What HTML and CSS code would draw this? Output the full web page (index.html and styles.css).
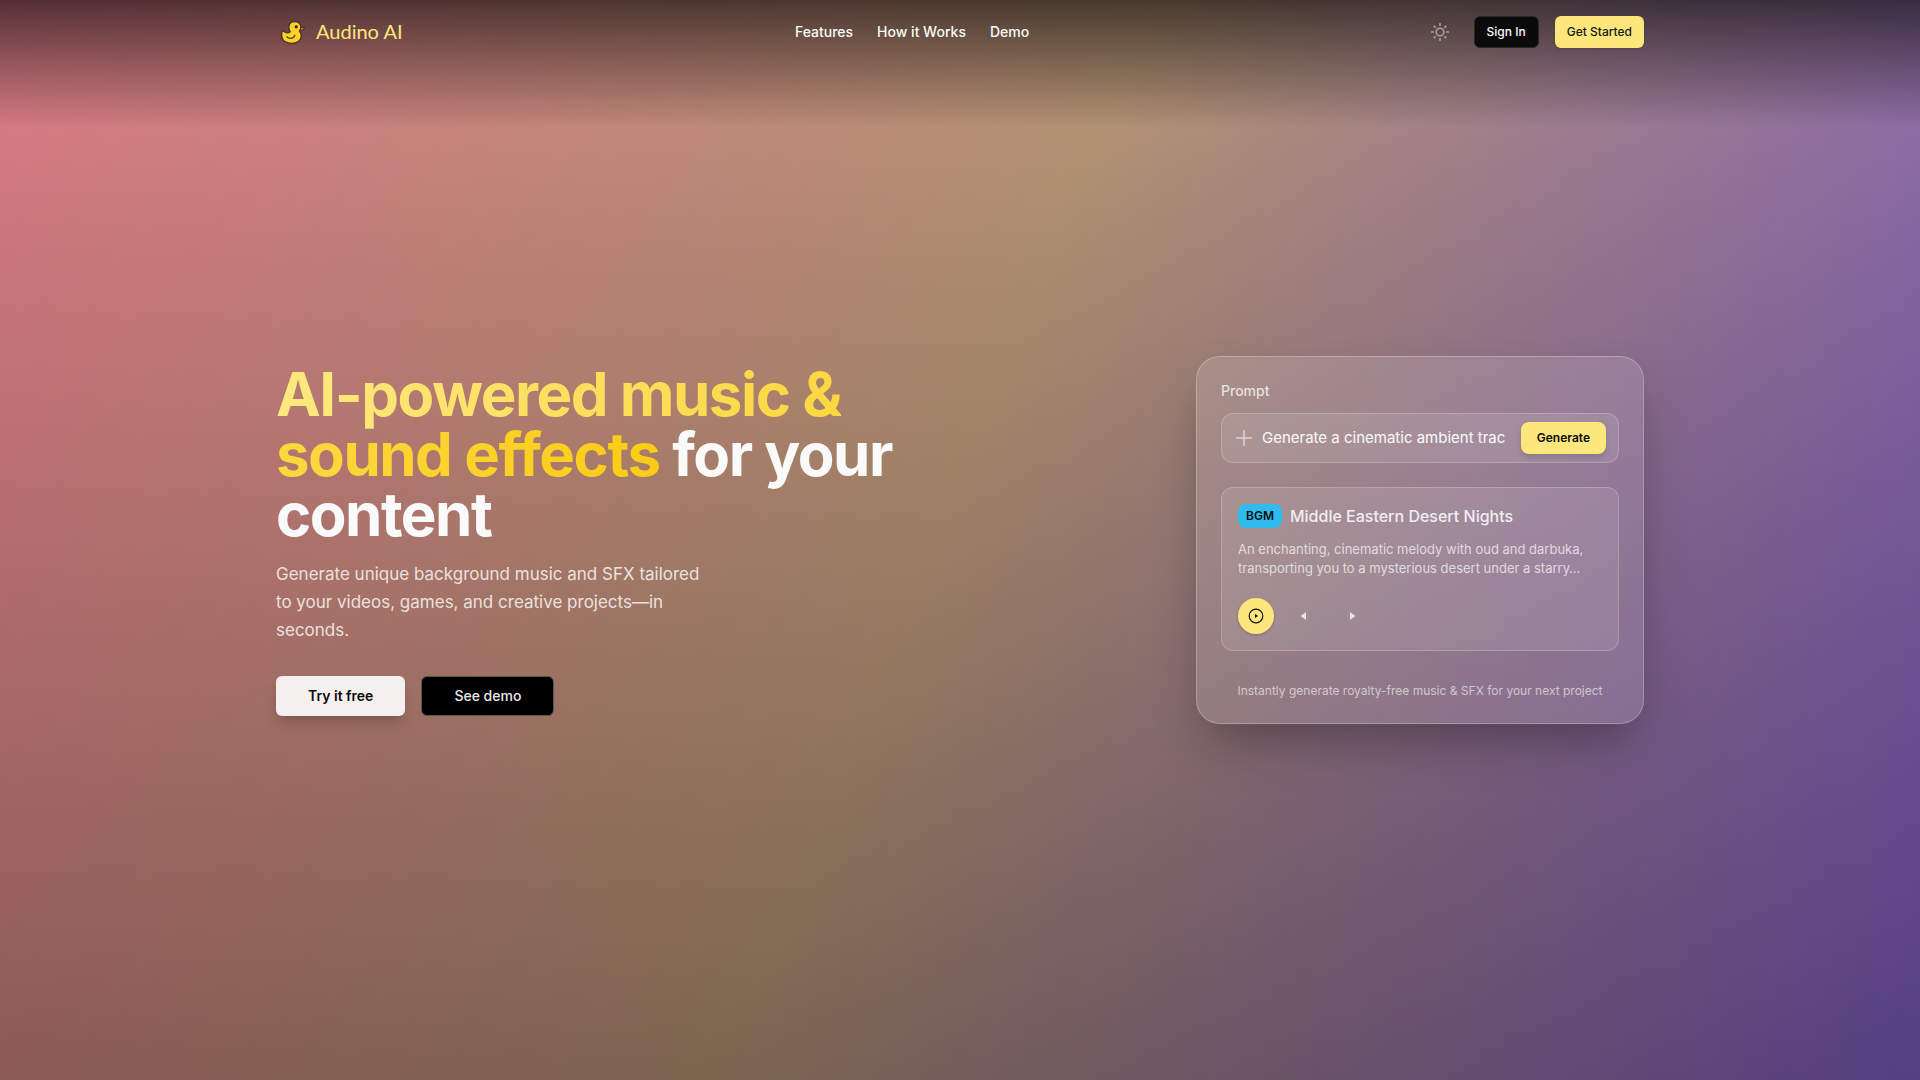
FILE: index.html
```html
<!DOCTYPE html>
<html lang="en">
<head>
<meta charset="utf-8">
<meta name="viewport" content="width=device-width, initial-scale=1">
<title>Audino AI</title>
<link rel="stylesheet" href="styles.css">
</head>
<body>
<header class="header">
  <div class="container bar">
    <a class="brand" href="#">
      <svg class="duck" viewBox="0 0 32 32" aria-hidden="true">
        <path d="M5.500 14.500C4 20 5 24.500 9 26.500c5 2.200 10.500 2 14-.5 3.600-2.700 4-7.500 1-11 1.200-1.200 1.800-2.800 1.600-4.500C25.200 7 22.500 4.700 19 4.700c-4 0-6.500 2.800-6.500 6.300 0 2.200.8 3.500 1.500 4.700-1.500 1.400-3.600 1.400-5.200.5C7.500 15.500 6.500 14.200 5.500 14.500Z" fill="#fbd12b" stroke="#4a3426" stroke-width="1.600" stroke-linejoin="round"/>
        <path d="M25.300 11.700l3.700-.9c.3 2-1 3.600-4.200 3.300Z" fill="#f6a21c" stroke="#4a3426" stroke-width="1.300" stroke-linejoin="round"/>
        <circle cx="20.500" cy="10.500" r="1.700" fill="#33241c"/>
        <path d="M10.500 21c1.800 2.600 7 2.600 8.500-1.300" fill="none" stroke="#5a401f" stroke-width="1.400" stroke-linecap="round"/>
      </svg>
      <span>Audino AI</span>
    </a>
    <nav class="nav">
      <a href="#features">Features</a>
      <a href="#how">How it Works</a>
      <a href="#demo">Demo</a>
    </nav>
    <div class="actions">
      <button class="theme" type="button" aria-label="Toggle theme">
        <svg viewBox="0 0 20 20" fill="none" stroke="currentColor" stroke-width="1.500">
          <circle cx="10" cy="10" r="3.800"/>
          <path d="M10 1v3M10 16v3M1 10h3M16 10h3M3.700 3.700l2 2M14.300 14.300l2 2M16.300 3.700l-2 2M5.700 14.300l-2 2"/>
        </svg>
      </button>
      <button class="btn btn-small btn-dark" type="button">Sign In</button>
      <button class="btn btn-small btn-yellow" type="button">Get Started</button>
    </div>
  </div>
</header>
<main class="container hero">
  <section class="intro">
    <h1><span class="accent">AI-powered music &amp; sound effects</span> for your content</h1>
    <p class="lead">Generate unique background music and SFX tailored to your videos, games, and creative projects—in seconds.</p>
    <div class="cta">
      <button class="btn btn-light" type="button">Try it free</button>
      <button class="btn btn-black" type="button">See demo</button>
    </div>
  </section>
  <section class="card">
    <label class="label" for="prompt">Prompt</label>
    <div class="prompt">
      <svg class="plus" viewBox="0 0 20 20" fill="none" stroke="currentColor" stroke-width="1.500"><path d="M10 2v16M2 10h16"/></svg>
      <input id="prompt" type="text" placeholder="Generate a cinematic ambient trac">
      <button class="btn generate" type="button">Generate</button>
    </div>
    <article class="track">
      <div class="track-head">
        <span class="badge">BGM</span>
        <h2>Middle Eastern Desert Nights</h2>
      </div>
      <p class="track-text">An enchanting, cinematic melody with oud and darbuka, transporting you to a mysterious desert under a starry…</p>
      <div class="controls">
        <button class="control play" type="button" aria-label="Play">
          <svg viewBox="0 0 16 16"><circle cx="8" cy="8" r="6.800" fill="none" stroke="currentColor" stroke-width="1.200"/><path d="M7 6v4l3-2z" fill="currentColor"/></svg>
        </button>
        <button class="control" type="button" aria-label="Previous">
          <svg viewBox="0 0 16 16"><path d="M10 4v8L4.500 8z" fill="currentColor"/></svg>
        </button>
        <button class="control" type="button" aria-label="Next">
          <svg viewBox="0 0 16 16"><path d="M6 4v8l5.500-4z" fill="currentColor"/></svg>
        </button>
      </div>
    </article>
    <p class="caption">Instantly generate royalty-free music &amp; SFX for your next project</p>
  </section>
</main>
</body>
</html>
```
FILE: styles.css
```css
*, *::before, *::after { box-sizing: border-box; }

body {
  margin: 0;
  min-height: 100vh;
  display: flex;
  flex-direction: column;
  color: #fafafa;
  font-family: Inter, "Liberation Sans", sans-serif;
  font-size: 16px;
  background:
    linear-gradient(to bottom, rgba(0, 0, 0, 0) 0%, rgba(0, 0, 0, 0.33) 100%),
    linear-gradient(112deg, #de7d88 0%, #b99777 49%, #7f5dc2 100%);
}

h1, h2, p { margin: 0; }
button, input { font: inherit; color: inherit; }
a { color: inherit; text-decoration: none; }

.container {
  width: 100%;
  max-width: 1400px;
  margin: 0 auto;
  padding: 0 16px;
}

.header {
  position: absolute;
  top: 0;
  left: 0;
  right: 0;
  height: 128px;
  background: linear-gradient(to bottom, rgba(0, 0, 0, 0.62), rgba(0, 0, 0, 0));
}

.bar {
  height: 64px;
  display: flex;
  align-items: center;
  justify-content: space-between;
}

.brand {
  display: flex;
  align-items: center;
  gap: 8px;
  color: #fce77d;
  font-family: Lato, sans-serif;
  font-size: 20px;
  line-height: 28px;
}
.brand span { padding-bottom: 2px; }
.duck { width: 32px; height: 32px; padding: 1px; }

.nav {
  display: flex;
  gap: 24px;
  font-size: 14px;
  font-weight: 500;
  line-height: 20px;
}

.actions {
  display: flex;
  align-items: center;
  gap: 16px;
}

.theme {
  display: flex;
  align-items: center;
  justify-content: center;
  width: 36px;
  height: 36px;
  padding: 0;
  border: 0;
  background: none;
  color: #a5a09f;
}
.theme svg { width: 20px; height: 20px; }

.btn {
  height: 40px;
  padding: 0 32px;
  border: 0;
  border-radius: 6px;
  font-size: 14px;
  font-weight: 500;
  line-height: 20px;
  white-space: nowrap;
}
.btn-small { height: 32px; padding: 0 12px; font-size: 12px; line-height: 16px; }
.btn-dark { background: #0a0a0a; border: 1px solid #272727; }
.btn-yellow { background: #fce77d; color: #171717; box-shadow: 0 1px 3px rgba(0, 0, 0, 0.15); }
.btn-light {
  background: #f5f0f0;
  color: #0a0a0a;
  font-weight: 600;
  box-shadow: 0 10px 15px -3px rgba(0, 0, 0, 0.15), 0 4px 6px -4px rgba(0, 0, 0, 0.15);
}
.btn-black { background: #000; border: 1px solid #54585a; color: #e8e8e8; }

.hero {
  flex: 1;
  display: flex;
  align-items: center;
  justify-content: space-between;
  gap: 48px;
}

.intro { flex: 0 1 672px; }

h1 {
  font-size: 60px;
  font-weight: 700;
  line-height: 60px;
  letter-spacing: -0.025em;
}
.accent {
  color: transparent;
  background: linear-gradient(to right, #fde880, #facc15);
  -webkit-background-clip: text;
  background-clip: text;
}

.lead {
  max-width: 436px;
  margin-top: 16px;
  font-size: 17px;
  line-height: 28px;
  color: rgba(255, 255, 255, 0.8);
}

.cta { display: flex; gap: 16px; margin-top: 32px; }

.card {
  display: flex;
  flex-direction: column;
  flex: 0 1 448px;
  min-width: 0;
  padding: 24px;
  border: 1px solid rgba(255, 255, 255, 0.25);
  border-radius: 24px;
  background: rgba(255, 255, 255, 0.13);
  box-shadow: 0 25px 50px -12px rgba(0, 0, 0, 0.35);
}

.label {
  font-size: 14px;
  font-weight: 500;
  line-height: 20px;
  color: rgba(255, 255, 255, 0.75);
}

.prompt {
  display: flex;
  align-items: center;
  gap: 8px;
  height: 50px;
  margin-top: 12px;
  padding: 0 12px;
  border: 1px solid rgba(255, 255, 255, 0.2);
  border-radius: 12px;
  background: rgba(255, 255, 255, 0.1);
}
.plus { flex: none; width: 20px; height: 20px; color: rgba(255, 255, 255, 0.6); }
.prompt input {
  flex: 1;
  min-width: 0;
  padding: 0;
  border: 0;
  outline: 0;
  background: none;
  font-size: 15px;
  line-height: 24px;
}
.prompt input::placeholder { color: #fafafa; opacity: 1; }
.generate {
  height: 32px;
  padding: 0 16px;
  border-radius: 8px;
  background: #fce77d;
  color: #0a0a0a;
  font-size: 12px;
  font-weight: 600;
  line-height: 16px;
  box-shadow: 0 4px 6px -1px rgba(0, 0, 0, 0.15);
}

.track {
  margin-top: 24px;
  padding: 16px;
  border: 1px solid rgba(255, 255, 255, 0.2);
  border-radius: 12px;
  background: rgba(255, 255, 255, 0.1);
}
.track-head { display: flex; align-items: center; gap: 8px; }
.badge {
  padding: 4px 8px;
  border-radius: 8px;
  background: #2fbbed;
  color: #0a0a0a;
  font-size: 12px;
  font-weight: 600;
  line-height: 16px;
}
h2 { font-size: 16px; font-weight: 500; line-height: 24px; color: #f2edf1; }
.track-text {
  margin-top: 12px;
  font-size: 13px;
  line-height: 19px;
  color: rgba(255, 255, 255, 0.7);
}

.controls { display: flex; gap: 12px; margin-top: 20px; }
.control {
  display: flex;
  align-items: center;
  justify-content: center;
  width: 36px;
  height: 36px;
  padding: 0;
  border: 0;
  border-radius: 50%;
  background: none;
  color: rgba(255, 255, 255, 0.75);
}
.control svg { width: 16px; height: 16px; }
.play { background: #fce77d; color: #0a0a0a; box-shadow: 0 1px 3px rgba(0, 0, 0, 0.2); }

.caption {
  margin-top: 32px;
  font-size: 12px;
  line-height: 16px;
  text-align: center;
  color: rgba(255, 255, 255, 0.6);
}
```
